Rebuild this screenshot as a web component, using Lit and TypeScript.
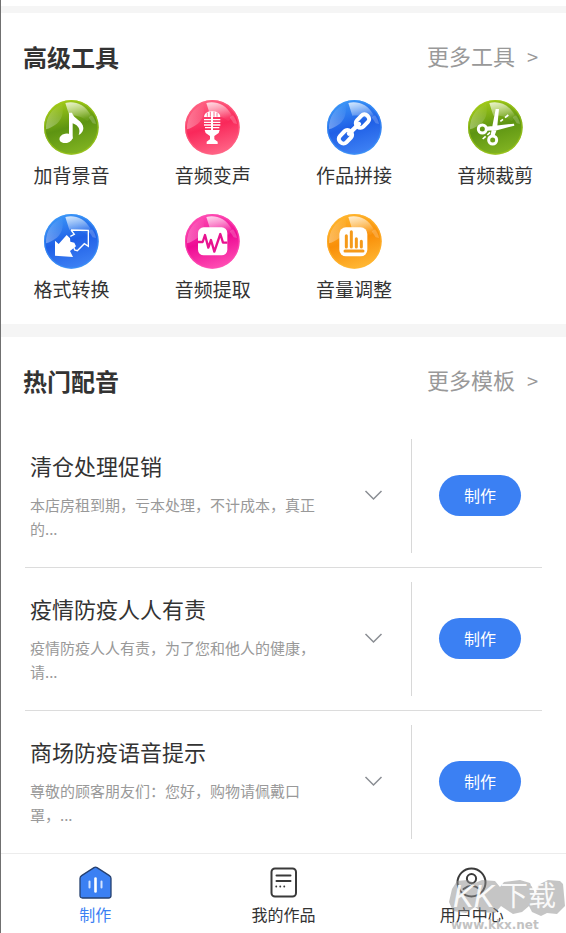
import { LitElement, html, svg, css } from "lit";
import type { SVGTemplateResult } from "lit";
import { customElement, property } from "lit/decorators.js";

type Palette = [string, string, string];

const PALETTES: Record<string, Palette> = {
  green: ["#a4cc18", "#5d9412", "#82b422"],
  red: ["#ff6484", "#f9285a", "#ff6688"],
  blue: ["#3b97f8", "#1f5fe6", "#3f82f4"],
  pink: ["#ff4fb4", "#ee0a94", "#ff4fb4"],
  orange: ["#ffb52e", "#f98f08", "#ffb836"],
};

/* Glyphs are drawn on a 165-unit square that the glossy ball fills. */
const GLYPHS: Record<string, SVGTemplateResult> = {
  note: svg`
    <ellipse cx="66" cy="115" rx="20" ry="14" transform="rotate(-12 66 115)" fill="#fff"/>
    <path d="M75 38h9c4 18 34 24 34 46 0 10-7 18-14 21 6-15 1-28-18-35v46H75z" fill="#fff"/>`,
  mic: svg`
    <path d="M57 51c1-11 10-17 24-17s24 6 25 17z" fill="#fff"/>
    <path d="M67 38v12M76 35v15M87 35v15M96 38v12" stroke="#f9285a" stroke-width="2"/>
    <path d="M57 59h49M57 67h49M57 75h49M60 83h43" stroke="#fff" stroke-width="4"/>
    <path d="M81 40v50" stroke="#fff" stroke-width="6"/>
    <path d="M59 90h45l-3 9-13 9v10l10 7v7H65v-7l10-7v-10l-13-9z" fill="#fff"/>`,
  link: svg`
    <g fill="none" stroke="#fff" stroke-width="12">
      <rect x="84" y="50" width="44" height="27" rx="12" transform="rotate(-46 106 63)"/>
      <rect x="33" y="97" width="44" height="27" rx="12" transform="rotate(-46 55 110)"/>
      <path d="M66 101l30-29" stroke-width="13" stroke-linecap="round"/>
    </g>`,
  scissors: svg`
    <g fill="none" stroke="#fff" stroke-width="9">
      <circle cx="43" cy="87" r="12"/>
      <circle cx="74" cy="120" r="12"/>
      <path d="M97 64l8-6M111 53l10-8M44 117l9-8M58 105l8-8" stroke-width="5"/>
    </g>
    <path d="M54 80l84-9 1 6-52 14-33 1zM67 110l16-83h10l-6 60-9 25z" fill="#fff"/>`,
  convert: svg`
    <path d="M33 125V80l11 10 24-27 10 10 1 10 12 3 5 11-18 14 9 18z" fill="#fff"/>
    <path d="M81 48l52 1v48l-12-8-21 21-8-2-3-9M81 48l10 13-12 6" fill="none" stroke="#fff" stroke-width="4"/>`,
  wave: svg`
    <rect x="39" y="40" width="88" height="84" rx="17" fill="#fff"/>
    <path d="M39 84h14l7-21 10 38 8-23 10 35 18-53 8 26h13" fill="none" stroke="#e8128f" stroke-width="7" stroke-linejoin="round"/>`,
  bars: svg`
    <rect x="37" y="40" width="84" height="87" rx="20" fill="#fff"/>
    <path d="M58 65v34M73 53v46M88 74v25M103 82v17M54 111h54" fill="none" stroke="#f59a1a" stroke-width="9" stroke-linecap="round"/>`,
};

@customElement("tool-ball")
class ToolBall extends LitElement {
  @property() glyph = "note";
  @property() tone = "green";

  static styles = css`
    :host { display: block; width: 55px; height: 55px; }
    .ball { display: block; width: 100%; height: 100%; }
  `;

  render() {
    const [top, mid, low] = PALETTES[this.tone];
    return html`<svg class="ball" viewBox="0 0 165 165" aria-hidden="true">
      <defs>
        <linearGradient id="body" x1="0.3" y1="0" x2="0.6" y2="1">
          <stop offset="0" stop-color=${top}/>
          <stop offset="0.5" stop-color=${mid}/>
          <stop offset="1" stop-color=${low}/>
        </linearGradient>
        <linearGradient id="shine" x1="0" y1="0" x2="0.3" y2="1">
          <stop offset="0" stop-color="#fff" stop-opacity="0.8"/>
          <stop offset="1" stop-color="#fff" stop-opacity="0.05"/>
        </linearGradient>
        <linearGradient id="side" x1="0" y1="1" x2="0.7" y2="0">
          <stop offset="0" stop-color="#fff" stop-opacity="0.35"/>
          <stop offset="1" stop-color="#fff" stop-opacity="0.04"/>
        </linearGradient>
      </defs>
      <circle cx="82" cy="82" r="82" fill="url(#body)"/>
      <circle cx="82" cy="82" r="80" fill="none" stroke=${top} stroke-width="4" opacity="0.6"/>
      <path d="M64 9c28-7 58 4 76 36 2 8-4 14-10 18-20-16-38-18-54-16z" fill="url(#shine)"/>
      <path d="M6 88C4 52 24 24 54 12c8 30-2 62-48 76z" fill="url(#side)"/>
      <path d="M134 52l10-6c6 8 10 16 12 26l-10-2z" fill="#fff" opacity="0.2"/>
      ${GLYPHS[this.glyph]}
    </svg>`;
  }
}

const TOOLS = [
  { name: "加背景音", glyph: "note", tone: "green" },
  { name: "音频变声", glyph: "mic", tone: "red" },
  { name: "作品拼接", glyph: "link", tone: "blue" },
  { name: "音频裁剪", glyph: "scissors", tone: "green" },
  { name: "格式转换", glyph: "convert", tone: "blue" },
  { name: "音频提取", glyph: "wave", tone: "pink" },
  { name: "音量调整", glyph: "bars", tone: "orange" },
];

const TEMPLATES = [
  { title: "清仓处理促销", text: "本店房租到期，亏本处理，不计成本，真正的..." },
  { title: "疫情防疫人人有责", text: "疫情防疫人人有责，为了您和他人的健康，请..." },
  { title: "商场防疫语音提示", text: "尊敬的顾客朋友们：您好，购物请佩戴口罩，..." },
];

const TABS = [
  {
    name: "制作",
    active: true,
    icon: svg`
      <path d="M15 1.6q1.500-1 3 0l12.400 8q1.600 1 1.600 3V29.500q0 2.500-2.500 2.500h-26Q1 32 1 29.500V12.600q0-2 1.600-3z" fill="#3b80f3" stroke="#26406f" stroke-width="1.300"/>
      <path d="M10.500 15.500v6M22.500 15.500v6" stroke="#d3e3ff" stroke-width="2" stroke-linecap="round"/>
      <path d="M16.500 12.500v13" stroke="#fff" stroke-width="2.600" stroke-linecap="round"/>`,
  },
  {
    name: "我的作品",
    active: false,
    icon: svg`
      <g fill="none" stroke="#3a3a3a" stroke-width="2" stroke-linecap="round">
        <rect x="4.500" y="2.500" width="24.500" height="28" rx="3.500"/>
        <path d="M9.500 9.500h14M9.500 15h14"/>
        <path d="M9.200 20.500h.1M13.200 20.500h.1M17.200 20.500h.1" stroke-width="1.800"/>
      </g>`,
  },
  {
    name: "用户中心",
    active: false,
    icon: svg`
      <g fill="none" stroke="#3a3a3a" stroke-width="2" stroke-linecap="round">
        <circle cx="16.500" cy="16.500" r="14"/>
        <circle cx="16.500" cy="12.600" r="4.600"/>
        <path d="M8.500 23q8-6.500 16 0"/>
      </g>`,
  },
];

@customElement("app-root")
class AppRoot extends LitElement {
  static styles = css`
    :host {
      display: block;
      color: #333;
      background: #fff;
      font-family: "Noto Sans CJK SC", "Noto Sans", sans-serif;
    }
    * { box-sizing: border-box; }
    .page {
      position: relative;
      display: flex;
      flex-direction: column;
      min-height: 100vh;
      border-left: 1px solid #707070;
    }
    .band { height: 13px; background: #f5f5f5; }
    .band.first { height: 7px; margin-top: 6px; }
    .head {
      display: flex;
      align-items: flex-start;
      justify-content: space-between;
      padding: 26px 28px 25px 22px;
    }
    .heading { margin: 0; font-size: 24px; line-height: 36px; font-weight: 700; }
    .more {
      display: flex;
      align-items: flex-start;
      gap: 12px;
      color: #999;
      font-size: 22px;
      line-height: 32px;
      text-decoration: none;
    }
    .arrow { font-size: 20px; line-height: 36px; }
    .tools {
      display: grid;
      grid-template-columns: repeat(4, 1fr);
      row-gap: 25px;
      padding-bottom: 21px;
    }
    .tool {
      display: flex;
      flex-direction: column;
      align-items: center;
      gap: 6px;
      padding: 0;
      border: 0;
      background: none;
      color: inherit;
      font: inherit;
      font-size: 19px;
      line-height: 28px;
    }
    .list { margin: 0; padding: 1px 24px 0; list-style: none; }
    .row {
      display: flex;
      align-items: center;
      padding: 14px 0;
      border-bottom: 1px solid #dcdcdc;
    }
    .row:last-child { border-bottom: 0; }
    .copy { flex: 1; padding: 0 24px 3px 5px; }
    .title { margin: 0; font-size: 22px; line-height: 32px; font-weight: 400; }
    .text { margin: 12px 0 0; color: #999; font-size: 15px; line-height: 24px; }
    .toggle { padding: 0; border: 0; background: none; }
    .chevron { display: block; width: 20px; height: 20px; }
    .action {
      display: flex;
      align-items: center;
      height: 114px;
      margin-left: 27px;
      padding: 0 21px 1px 27px;
      border-left: 1px solid #d8d8d8;
    }
    .make {
      width: 82px;
      height: 41px;
      padding: 0 0 2px;
      border: 0;
      border-radius: 21px;
      background: #3b80f3;
      color: #fff;
      font: inherit;
      font-size: 16px;
    }
    .tabs {
      display: grid;
      grid-template-columns: repeat(3, 1fr);
      margin-top: auto;
      padding: 12px 0 7px;
      border-top: 1px solid #ececec;
    }
    .tab {
      display: flex;
      flex-direction: column;
      align-items: center;
      gap: 3px;
      color: #333;
      font-size: 16px;
      line-height: 24px;
      text-decoration: none;
    }
    .tab.active { color: #3b80f3; }
    .tab-icon { display: block; width: 33px; height: 33px; }
    .mark {
      position: absolute;
      right: 0;
      bottom: 0;
      width: 118px;
      height: 56px;
      pointer-events: none;
    }
    .mark-name { font-size: 28px; fill: #fff; opacity: 0.9; }
    .mark-latin { font-family: "Liberation Sans", sans-serif; font-style: italic; font-size: 31px; }
    .mark-site {
      font-family: "DejaVu Sans", sans-serif;
      font-size: 12px;
      font-weight: 700;
      fill: #b8b8b8;
      opacity: 0.85;
    }
  `;

  private head(title: string, more: string) {
    return html`<header class="head">
      <h2 class="heading">${title}</h2>
      <a class="more" href="#"><span>${more}</span><span class="arrow">&gt;</span></a>
    </header>`;
  }

  render() {
    return html`<div class="page">
      <div class="band first"></div>
      <section>
        ${this.head("高级工具", "更多工具")}
        <div class="tools">
          ${TOOLS.map((t) => html`<button class="tool" type="button">
            <tool-ball glyph=${t.glyph} tone=${t.tone}></tool-ball>
            <span>${t.name}</span>
          </button>`)}
        </div>
      </section>
      <div class="band"></div>
      <section>
        ${this.head("热门配音", "更多模板")}
        <ul class="list">
          ${TEMPLATES.map((t) => html`<li class="row">
            <div class="copy">
              <h3 class="title">${t.title}</h3>
              <p class="text">${t.text}</p>
            </div>
            <button class="toggle" type="button" aria-label="展开">
              <svg class="chevron" viewBox="0 0 20 20" aria-hidden="true">
                <path d="M1.500 5l8 8 8-8" fill="none" stroke="#8a8d93" stroke-width="1.500"/>
              </svg>
            </button>
            <div class="action"><button class="make" type="button">制作</button></div>
          </li>`)}
        </ul>
      </section>
      <nav class="tabs">
        ${TABS.map((t) => html`<a class="tab ${t.active ? "active" : ""}" href="#">
          <svg class="tab-icon" viewBox="0 0 33 33" aria-hidden="true">${t.icon}</svg>
          <span>${t.name}</span>
        </a>`)}
      </nav>
      <svg class="mark" viewBox="0 0 118 56">
        <path d="M4 12l5-8 10-1 8 3 7-3 13 1 5 6 4-5 16-2 10 3 5 10 3-8 10-5 12 1 3 3 2 22-8 8-10-1-6 3-9-4-3-6-7 6-9 2-12-8-6 7-13-1-7-5-9 6-13-2-4-9z" fill="#8c8c8c" opacity="0.5"/>
        <text class="mark-name mark-latin" x="5" y="30">KK</text>
        <text class="mark-name" x="52" y="29">下载</text>
        <text class="mark-site" x="3" y="52">www.kkx.net</text>
      </svg>
    </div>`;
  }
}
